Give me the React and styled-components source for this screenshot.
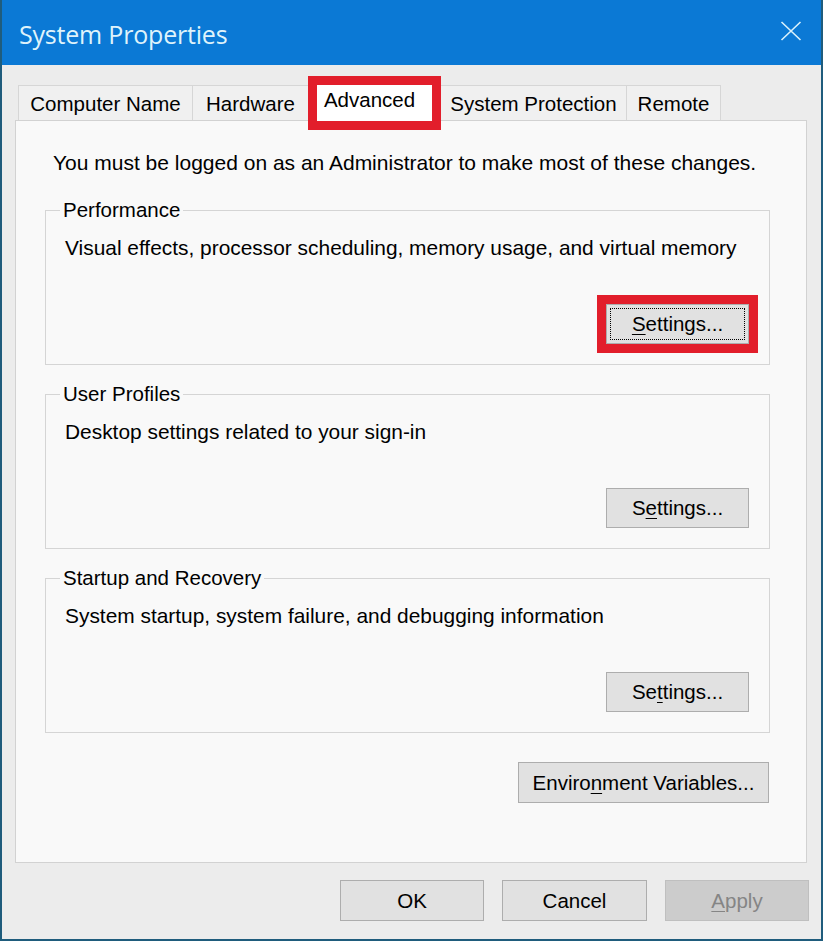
import React from "react";
import styled, { createGlobalStyle } from "styled-components";

const Global = createGlobalStyle`
  html, body { margin: 0; padding: 0; background: #ffffff; }
  body { font-family: "Liberation Sans", Arial, sans-serif; color: #000; }
  * { box-sizing: border-box; }
`;

const Window = styled.div`
  width: 823px;
  height: 941px;
  display: flex;
  flex-direction: column;
  background: #ececec;
  border: 2px solid #1f5c7c;
  border-top: none;
`;

const TitleBar = styled.div`
  height: 65px;
  flex: none;
  background: #0b79d5;
  display: flex;
  align-items: center;
  justify-content: space-between;
  padding: 0 19px 0 17px;
`;

const Title = styled.div`
  font-family: "Open Sans", "Liberation Sans", sans-serif;
  font-size: 25px;
  color: #dff3fb;
  letter-spacing: -0.2px;
  margin-top: 2px;
`;

const Body = styled.div`
  flex: 1;
  display: flex;
  flex-direction: column;
  padding: 20px 14px 0 13px;
`;

const TabRow = styled.div`
  display: flex;
  align-items: flex-end;
  height: 35px;
  margin-left: 4px;
`;

const Tab = styled.div`
  width: ${(p) => p.$w}px;
  height: 35px;
  margin-left: -1px;
  display: flex;
  align-items: center;
  justify-content: center;
  background: #f0f0f0;
  border: 1px solid #d6d6d6;
  border-bottom: none;
  font-size: 20.5px;
  padding-top: 2px;
`;

const ActiveTab = styled.div`
  position: relative;
  z-index: 1;
  width: ${(p) => p.$w}px;
  height: 54px;
  margin-left: -1px;
  margin-bottom: -10px;
  display: flex;
  align-items: center;
  justify-content: center;
  background: #ffffff;
  border: 9px solid #e21e2b;
  font-size: 20.5px;
  padding: 0 10px 6px 0;
`;

const Panel = styled.div`
  height: 743px;
  display: flex;
  flex-direction: column;
  background: #f9f9f9;
  border: 1px solid #d2d2d2;
  padding: 30px 36px 0 29px;
`;

const Intro = styled.div`
  font-size: 21px;
  line-height: 24px;
  margin-left: 8px;
  margin-bottom: 23px;
  white-space: nowrap;
`;

const Group = styled.fieldset`
  margin: 0 0 17px 0;
  padding: 0 20px 20px 19px;
  min-inline-size: 0;
  border: 1px solid #d5d5d5;
  display: flex;
  flex-direction: column;
`;

const Legend = styled.legend`
  font-size: 20.5px;
  line-height: 24px;
  padding: 0 3px;
  margin-left: -5px;
`;

const Description = styled.div`
  font-size: 20.9px;
  line-height: 24px;
  margin-top: 14px;
  white-space: nowrap;
`;

const Button = styled.button`
  position: relative;
  width: ${(p) => p.$w || 143}px;
  height: ${(p) => p.$h || 40}px;
  font-family: "Liberation Sans", Arial, sans-serif;
  font-size: 20.5px;
  color: ${(p) => (p.disabled ? "#858585" : "#000")};
  background: ${(p) => (p.disabled ? "#cccccc" : "#e1e1e1")};
  border: 1px solid ${(p) => (p.disabled ? "#bfbfbf" : "#adadad")};
  padding: 0;
  cursor: default;
  outline: ${(p) => (p.$highlight ? "9px solid #e21e2b" : "none")};
  outline-offset: 0;
  &::after {
    content: "";
    display: ${(p) => (p.$focused ? "block" : "none")};
    position: absolute;
    inset: 3px;
    border: 1px dotted #000;
  }
`;

const GroupButton = styled(Button)`
  align-self: flex-end;
  margin-top: 44px;
`;

const EnvButton = styled(Button)`
  align-self: flex-end;
  margin-top: 12px;
  margin-right: 1px;
`;

const Key = styled.u`
  text-decoration-thickness: 1px;
  text-underline-offset: 3px;
`;

const Footer = styled.div`
  display: flex;
  justify-content: flex-end;
  gap: 18px;
  padding-top: 17px;
  margin-right: -2px;
`;

const CloseIcon = () => (
  <svg width="22" height="20" viewBox="0 0 22 20" style={{ marginTop: -4 }}>
    <path d="M1.5 1 L20.5 19 M20.5 1 L1.5 19" stroke="#d9f1fb" strokeWidth="1.6" fill="none" />
  </svg>
);

const groups = [
  {
    title: "Performance",
    text: "Visual effects, processor scheduling, memory usage, and virtual memory",
    label: (
      <>
        <Key>S</Key>ettings...
      </>
    ),
    highlight: true,
  },
  {
    title: "User Profiles",
    text: "Desktop settings related to your sign-in",
    label: (
      <>
        S<Key>e</Key>ttings...
      </>
    ),
  },
  {
    title: "Startup and Recovery",
    text: "System startup, system failure, and debugging information",
    label: (
      <>
        Se<Key>t</Key>tings...
      </>
    ),
  },
];

export default function App() {
  return (
    <>
      <Global />
      <Window>
        <TitleBar>
          <Title>System Properties</Title>
          <CloseIcon />
        </TitleBar>
        <Body>
          <TabRow>
            <Tab $w={175}>Computer Name</Tab>
            <Tab $w={117}>Hardware</Tab>
            <ActiveTab $w={133}>Advanced</ActiveTab>
            <Tab $w={187}>System Protection</Tab>
            <Tab $w={95}>Remote</Tab>
          </TabRow>
          <Panel>
            <Intro>You must be logged on as an Administrator to make most of these changes.</Intro>
            {groups.map((g) => (
              <Group key={g.title}>
                <Legend>{g.title}</Legend>
                <Description>{g.text}</Description>
                <GroupButton $highlight={g.highlight} $focused={g.highlight}>
                  {g.label}
                </GroupButton>
              </Group>
            ))}
            <EnvButton $w={251} $h={41}>
              Enviro<Key>n</Key>ment Variables...
            </EnvButton>
          </Panel>
          <Footer>
            <Button $w={144} $h={41}>OK</Button>
            <Button $w={145} $h={41}>Cancel</Button>
            <Button $w={144} $h={41} disabled>
              <Key>A</Key>pply
            </Button>
          </Footer>
        </Body>
      </Window>
    </>
  );
}
